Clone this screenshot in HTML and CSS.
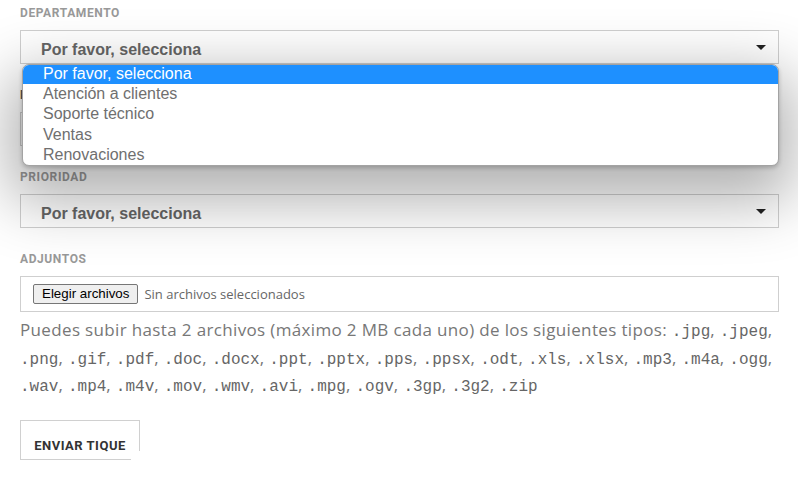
FILE: index.html
```html
<!DOCTYPE html>
<html lang="es">
  <head>
    <meta charset="UTF-8" />
    <meta name="viewport" content="width=device-width, initial-scale=1.0" />
    <title>Enviar tique</title>
    <link rel="stylesheet" href="styles.css">
  </head>
  <body>
    <form class="ticket-form">
      <div class="field">
        <label class="field-label">Departamento</label>
        <div class="select">
          <span class="select-value">Por favor, selecciona</span>
          <span class="select-arrow"></span>
        </div>

        <!-- open dropdown of the native select -->
        <ul class="dropdown">
          <li class="option selected">Por favor, selecciona</li>
          <li class="option">Atención a clientes</li>
          <li class="option">Soporte técnico</li>
          <li class="option">Ventas</li>
          <li class="option">Renovaciones</li>
        </ul>
      </div>

      <div class="field">
        <label class="field-label dark">Producto</label>
        <div class="select">
          <span class="select-value">Por favor, selecciona</span>
          <span class="select-arrow"></span>
        </div>
      </div>

      <div class="field">
        <label class="field-label">Prioridad</label>
        <div class="select">
          <span class="select-value">Por favor, selecciona</span>
          <span class="select-arrow"></span>
        </div>
      </div>

      <div class="field">
        <label class="field-label">Adjuntos</label>
        <div class="file-box">
          <span class="file-button">Elegir archivos</span>
          <span class="file-status">Sin archivos seleccionados</span>
        </div>
        <p class="help">
          Puedes subir hasta 2 archivos (máximo 2 MB cada uno) de los siguientes tipos: <code>.jpg</code>, <code>.jpeg</code>, <code>.png</code>, <code>.gif</code>, <code>.pdf</code>, <code>.doc</code>, <code>.docx</code>, <code>.ppt</code>, <code>.pptx</code>, <code>.pps</code>, <code>.ppsx</code>, <code>.odt</code>, <code>.xls</code>, <code>.xlsx</code>, <code>.mp3</code>, <code>.m4a</code>, <code>.ogg</code>, <code>.wav</code>, <code>.mp4</code>, <code>.m4v</code>, <code>.mov</code>, <code>.wmv</code>, <code>.avi</code>, <code>.mpg</code>, <code>.ogv</code>, <code>.3gp</code>, <code>.3g2</code>, <code>.zip</code>
        </p>
      </div>

      <button type="button" class="submit">Enviar tique</button>
    </form>
  </body>
</html>
```

FILE: styles.css
```css
body {
  margin: 0;
  padding: 0 19px 0 20px;
  background-color: #fff;
  font-family: "Open Sans", Arial, sans-serif;
}

.ticket-form {
  display: flex;
  flex-direction: column;
}

.field {
  position: relative;
  display: flex;
  flex-direction: column;
  margin-bottom: 18px;
}

.field-label {
  display: block;
  height: 18px;
  margin-top: 4px;
  margin-bottom: 8px;
  font-family: Roboto, Arial, sans-serif;
  font-size: 12px;
  font-weight: 700;
  line-height: 18px;
  letter-spacing: 0.6px;
  text-transform: uppercase;
  color: #999;
}

.field-label.dark {
  color: #555;
}

.select {
  display: flex;
  align-items: center;
  justify-content: space-between;
  height: 32px;
  padding: 0 12px 0 20px;
  border: 1px solid #cfcfcf;
  background-color: #fff;
}

.select-value {
  padding-top: 6px;
  font-family: "Liberation Sans", Arial, sans-serif;
  font-size: 16px;
  font-weight: 700;
  color: #666;
}

.select-arrow {
  width: 0;
  height: 0;
  border-left: 5px solid transparent;
  border-right: 5px solid transparent;
  border-top: 5px solid #222;
}

.dropdown {
  position: absolute;
  top: 64px;
  left: 2px;
  right: 0;
  z-index: 10;
  margin: 0;
  padding: 0;
  list-style: none;
  background-color: #fff;
  border: 1px solid #a3a3a3;
  border-radius: 7px;
  overflow: hidden;
  box-shadow: 0 22px 60px 14px rgba(0, 0, 0, 0.3), 0 2px 4px rgba(0, 0, 0, 0.2);
}

.option {
  height: 20.3px;
  padding-left: 20px;
  font-family: "Liberation Sans", Arial, sans-serif;
  font-size: 16px;
  line-height: 20px;
  color: #6f6f6f;
}

.option.selected {
  height: 19px;
  line-height: 17px;
  background-color: #1e90ff;
  color: #fff;
}

.file-box {
  display: flex;
  align-items: center;
  height: 34px;
  padding-left: 12px;
  border: 1px solid #cfcfcf;
}

.file-button {
  padding: 1px 8px 2px;
  border: 1px solid #767676;
  border-radius: 2px;
  background-color: #efefef;
  font-family: "Liberation Sans", Arial, sans-serif;
  font-size: 13.33px;
  color: #000;
}

.file-status {
  margin-left: 6px;
  font-size: 13px;
  color: #666;
}

.help {
  margin: 4px 0 0;
  font-size: 17px;
  line-height: 27.5px;
  letter-spacing: 0.35px;
  color: #777;
}

.help code {
  font-family: "Liberation Mono", monospace;
  font-size: 16px;
  line-height: 1;
  letter-spacing: 0;
  color: #666;
}

.submit {
  position: relative;
  align-self: flex-start;
  width: 120px;
  height: 40px;
  margin-top: 3px;
  padding: 12px 0 0;
  border: 1px solid #d0d0d0;
  background-color: #fff;
  font-family: Roboto, Arial, sans-serif;
  font-size: 13px;
  font-weight: 700;
  letter-spacing: 0.5px;
  text-transform: uppercase;
  color: #333;
}

/* the corner of the button is cut off in the original */
.submit::after {
  content: "";
  position: absolute;
  right: -1px;
  bottom: -1px;
  width: 9px;
  height: 9px;
  background-color: #fff;
}
```
